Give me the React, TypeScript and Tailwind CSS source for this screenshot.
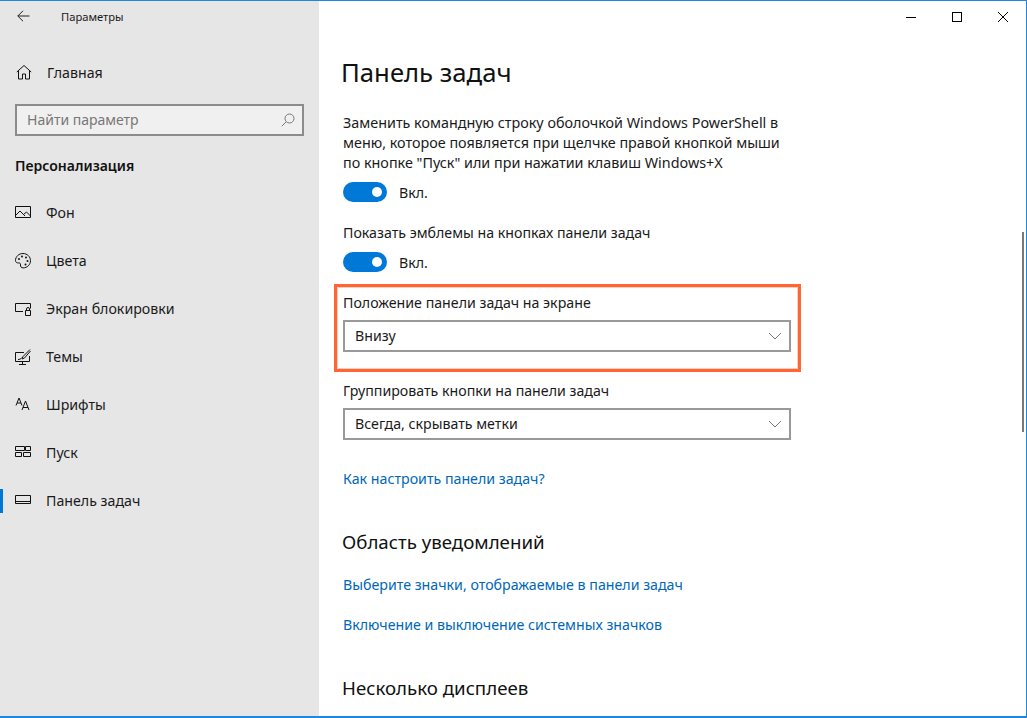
import React from 'react';
import clsx from 'clsx';

const FONT = "font-['Noto_Sans','Open_Sans',sans-serif]";

function Icon({ children }: { children: React.ReactNode }) {
  return (
    <svg width="16" height="16" viewBox="0 0 16 16" fill="none" stroke="#111" strokeWidth="1" className="shrink-0">
      {children}
    </svg>
  );
}

const navItems: { label: string; icon: React.ReactNode; active?: boolean }[] = [
  {
    label: 'Фон',
    icon: (
      <Icon>
        <path d="M.5 1.500h15v11h-15z" />
        <path d="M1 10l4-4 5 5M9 9l2.500-2 4 4" />
      </Icon>
    ),
  },
  {
    label: 'Цвета',
    icon: (
      <Icon>
        <path d="M8 .5C3.800.5.500 3.600.500 7.500c0 1.800 1.500 2.600 2.800 2.400 1.500-.2 2.500.6 2.200 2-.3 1.600.8 3 2.600 3 4 0 7.400-3.200 7.400-7.200C15.500 3.700 12.200.5 8 .5z" />
        <circle cx="4" cy="6" r="1" fill="#111" stroke="none" />
        <circle cx="7" cy="3.500" r="1" fill="#111" stroke="none" />
        <circle cx="11" cy="4.500" r="1" fill="#111" stroke="none" />
        <circle cx="12.500" cy="8" r="1" fill="#111" stroke="none" />
        <circle cx="10.500" cy="11.500" r="1" fill="#111" stroke="none" />
      </Icon>
    ),
  },
  {
    label: 'Экран блокировки',
    icon: (
      <Icon>
        <path d="M8 10.500H.5v-8h15v5" />
        <path d="M10.500 9.500h5v5h-5zM11.500 9.500V8a1.500 1.500 0 0 1 3 0v1.500" />
      </Icon>
    ),
  },
  {
    label: 'Темы',
    icon: (
      <Icon>
        <path d="M9 3.500H.5v9h14V7M7.500 12.500V15M4 15.500h7" />
        <path d="M15 .5L8 7.500l-1 2.500 2.500-1L15.500 2" />
        <path d="M3 10.500c1.500 0 3-.5 4-2" />
      </Icon>
    ),
  },
  {
    label: 'Шрифты',
    icon: (
      <Icon>
        <path d="M1 8.500L4 1l3 7.500M2 6h4" />
        <path d="M7 13l3.500-9 3.500 9M8 10.500h5" />
      </Icon>
    ),
  },
  {
    label: 'Пуск',
    icon: (
      <Icon>
        <path d="M.5 1.500h9v4h-9zM10.500 1.500h5v4h-5zM.5 7.500h6v4h-6zM8.500 7.500h7v4h-7z" />
      </Icon>
    ),
  },
  {
    label: 'Панель задач',
    active: true,
    icon: (
      <Icon>
        <path d="M.5 2.500h15v8h-15zM.5 8.500h15" />
      </Icon>
    ),
  },
];

function Toggle({ className }: { className: string }) {
  return (
    <div className={clsx('flex h-5 items-center', className)}>
      <div className="flex h-5 w-11 items-center justify-end rounded-full bg-[#0078d7] pr-[5px]">
        <div className="h-[10px] w-[10px] rounded-full bg-white" />
      </div>
      <span className="ml-3 pt-[2px] text-[14.2px] leading-5 text-[#1a1a1a]">Вкл.</span>
    </div>
  );
}

function Select({ value }: { value: string }) {
  return (
    <div className="flex h-8 w-[448px] items-center justify-between border-2 border-[#999] pl-[10px] pr-[7px] pb-px text-[14.2px] text-[#1a1a1a]">
      <span>{value}</span>
      <svg width="14" height="8" viewBox="0 0 14 8" fill="none" stroke="#767676" strokeWidth="1">
        <path d="M1 1l6 6 6-6" />
      </svg>
    </div>
  );
}

export default function App() {
  return (
    <div className={`${FONT} flex h-[718px] w-[1027px] overflow-hidden border-t border-r border-b-2 border-[#1e88e0] bg-white text-black`}>
      <aside className="flex w-[319px] shrink-0 flex-col bg-[#e6e6e6]">
        <div className="flex h-8 items-center pl-[17px]">
          <svg width="13" height="12" viewBox="0 0 13 12" fill="none" stroke="#222" strokeWidth="1" className="mb-[2px]">
            <path d="M12.500 6H.8M6 .8L.8 6 6 11.200" />
          </svg>
          <span className="ml-[31px] text-[11.2px] text-[#1a1a1a]">Параметры</span>
        </div>
        <div className="mt-4 flex h-12 items-center pl-[16px]">
          <svg width="16" height="16" viewBox="0 0 16 16" fill="none" stroke="#111" strokeWidth="1">
            <path d="M.8 7L8 .5 15.200 7M2.500 6v8h4V9h3v5h4V6" />
          </svg>
          <span className="ml-[15px] pb-px text-[14.2px] text-[#1a1a1a]">Главная</span>
        </div>
        <div className="mx-[15px] mt-[7px] flex h-8 items-center justify-between border-2 border-[#8c8c8c] bg-[#f0f0f0] pl-[10px] pr-[7px] pb-px text-[14px] text-[#777]">
          <span>Найти параметр</span>
          <svg width="14" height="14" viewBox="0 0 14 14" fill="none" stroke="#777" strokeWidth="1">
            <circle cx="8.500" cy="5.500" r="4.500" />
            <path d="M5.200 8.800L.8 13.200" />
          </svg>
        </div>
        <div className="mt-5 pl-[15px] text-[14px] leading-5 font-semibold text-[#111]">Персонализация</div>
        <nav className="mt-[13px] flex flex-col">
          {navItems.map((item) => (
            <div key={item.label} className="relative flex h-12 items-center pl-[15px]">
              {item.active && <div className="absolute top-3 left-0 h-6 w-[3px] bg-[#0078d7]" />}
              {item.icon}
              <span className="ml-[15px] pb-px text-[14.2px] text-[#1a1a1a]">{item.label}</span>
            </div>
          ))}
        </nav>
      </aside>

      <main className="relative flex min-w-0 flex-1 flex-col">
        <div className="flex h-8 justify-end">
          <div className="flex w-[46px] items-center justify-center">
            <div className="h-px w-[10px] bg-black" />
          </div>
          <div className="flex w-[46px] items-center justify-center">
            <div className="h-[10px] w-[10px] border border-black" />
          </div>
          <div className="flex w-[46px] items-center justify-center">
            <svg width="10" height="10" viewBox="0 0 10 10" stroke="#000" strokeWidth="1" fill="none">
              <path d="M0 0l10 10M10 0L0 10" />
            </svg>
          </div>
        </div>

        <div className="pl-[24px] text-[14.2px] leading-5 text-[#1a1a1a]">
          <h1 className="mt-[20px] -ml-[2px] text-[25.7px] leading-10 font-normal text-[#111]">Панель задач</h1>
          <p className="mt-[20px] w-[470px] text-[14.35px] leading-5">
            Заменить командную строку оболочкой Windows PowerShell в
            <br />
            меню, которое появляется при щелчке правой кнопкой мыши
            <br />
            по кнопке "Пуск" или при нажатии клавиш Windows+X
          </p>
          <Toggle className="mt-[9px]" />
          <div className="mt-5 h-5 leading-[22px]">Показать эмблемы на кнопках панели задач</div>
          <Toggle className="mt-[10px]" />
          <div className="relative mt-5">
            <div className="h-5 leading-[22px]">Положение панели задач на экране</div>
            <div className="mt-2">
              <Select value="Внизу" />
            </div>
            <div className="absolute -top-2 -left-[9px] h-[88px] w-[467px] border-[3px] border-[#ff6633] shadow-[inset_0_0_0_1px_#ffd0c0]" />
          </div>
          <div className="mt-[29px]">Группировать кнопки на панели задач</div>
          <div className="mt-[7px]">
            <Select value="Всегда, скрывать метки" />
          </div>
          <div className="mt-[29px] text-[#0067b8]">Как настроить панели задач?</div>
          <h2 className="mt-10 -ml-px h-7 text-[18.7px] leading-[26px] font-normal text-[#111]">Область уведомлений</h2>
          <div className="mt-[18px] text-[#0067b8]">Выберите значки, отображаемые в панели задач</div>
          <div className="mt-5 text-[#0067b8]">Включение и выключение системных значков</div>
          <h2 className="mt-10 -ml-px h-7 text-[18.7px] leading-[26px] font-normal text-[#111]">Несколько дисплеев</h2>
        </div>

        <div className="absolute top-[231px] right-[2px] h-[200px] w-[2px] bg-[#7a7a7a]" />
      </main>
    </div>
  );
}
